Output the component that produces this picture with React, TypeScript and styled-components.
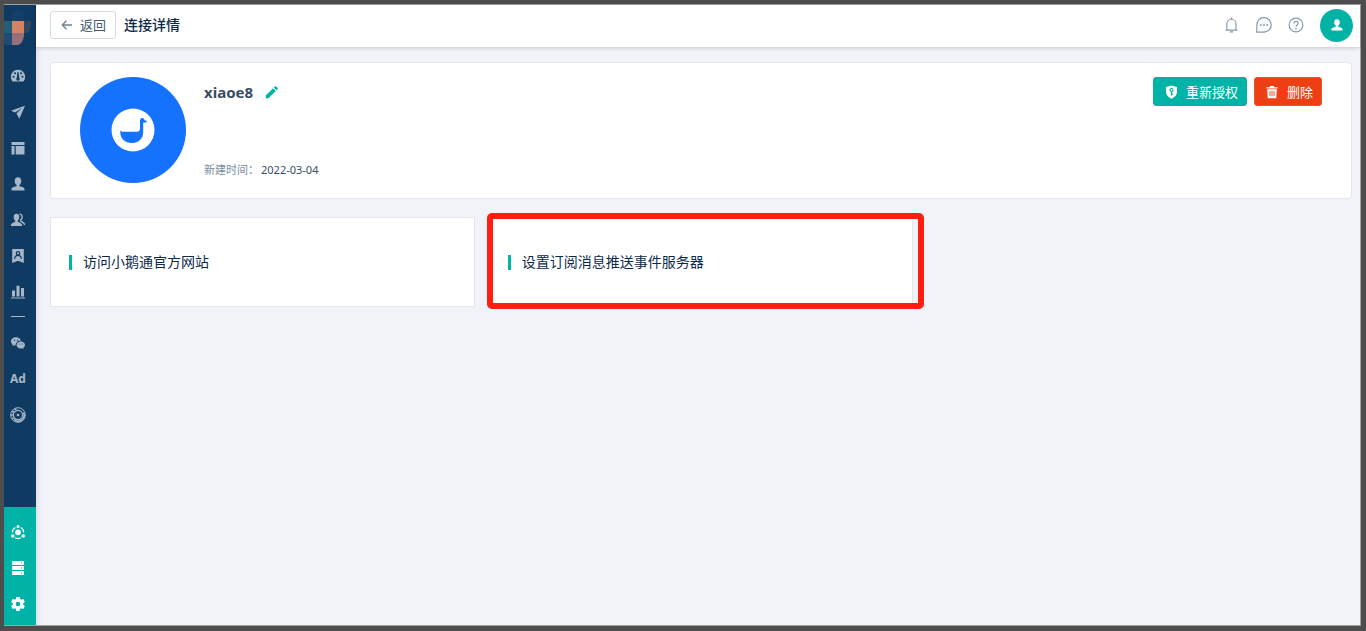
import React from "react";
import styled, { createGlobalStyle, css } from "styled-components";

const GlobalStyle = createGlobalStyle`
  *, *::before, *::after { box-sizing: border-box; }
  body {
    margin: 0;
    font-family: "Noto Sans", "Noto Sans CJK SC", sans-serif;
    color: #0b2a4a;
  }
  button { font: inherit; cursor: pointer; }
  a { color: inherit; text-decoration: none; }
  svg { display: block; flex: none; }
`;

const teal = "#00b3a6";
const line = "#e4e7eb";

const Frame = styled.div`
  display: flex;
  min-height: 100vh;
  border: solid #4d4d4d;
  border-width: 4px 5px 5px 4px;
`;

const Window = styled.div`
  display: flex;
  flex: 1;
  min-width: 0;
  border: solid #a0a2a4;
  border-width: 1px 1px 1px 0;
`;

const Sidebar = styled.aside`
  display: flex;
  flex-direction: column;
  flex: none;
  width: 32px;
  background: #0f3a61;
  color: #a5b7c8;
`;

const Brand = styled.a`
  height: 53px;
`;

const Nav = styled.nav<{ $active?: boolean }>`
  display: flex;
  flex-direction: column;
  ${(p) =>
    p.$active &&
    css`
      margin-top: auto;
      padding: 7px 0 3px;
      background: ${teal};
      color: #fff;
    `}
`;

const NavLink = styled.a`
  display: flex;
  align-items: center;
  justify-content: center;
  height: 36px;
  padding-right: 4px;
`;

const Divider = styled.hr`
  width: 14px;
  height: 1px;
  margin: 6px 0 8px 7px;
  border: 0;
  background: #a5b7c8;
`;

const Page = styled.div`
  display: flex;
  flex: 1;
  flex-direction: column;
  min-width: 0;
  background: #f2f3f8;
  box-shadow: inset 5px 0 5px -3px rgba(15, 58, 97, 0.1);
`;

const Header = styled.header`
  display: flex;
  align-items: center;
  height: 42px;
  padding: 0 7px 2px 14px;
  background: #fff;
  box-shadow: 0 1px 4px rgba(0, 0, 0, 0.18);
`;

const BackButton = styled.button`
  display: flex;
  align-items: center;
  gap: 6px;
  height: 28px;
  padding: 0 9px;
  border: 1px solid #d3dae0;
  border-radius: 3px;
  background: #fff;
  color: #425a70;
  font-size: 13px;
  line-height: 18px;
`;

const Title = styled.h1`
  margin: 0 auto 0 8px;
  font-size: 14px;
  line-height: 20px;
  font-weight: 500;
`;

const HeaderTools = styled.div`
  display: flex;
  align-items: center;
  gap: 16px;
  color: #8796a8;
`;

const IconButton = styled.button`
  padding: 0;
  border: 0;
  background: none;
  color: inherit;
`;

const UserButton = styled(IconButton)`
  display: flex;
  align-items: center;
  justify-content: center;
  width: 33px;
  height: 33px;
  border-radius: 50%;
  background: ${teal};
  color: #fff;
`;

const Content = styled.main`
  display: flex;
  flex-direction: column;
  gap: 18px;
  padding: 15px 8px 15px 14px;
`;

const Summary = styled.section`
  display: flex;
  gap: 18px;
  padding: 14px 29px 15px;
  border: 1px solid ${line};
  border-radius: 4px;
  background: #fff;
`;

const Details = styled.div`
  display: flex;
  flex: 1;
  flex-direction: column;
  justify-content: space-between;
  padding: 4px 0;
`;

const NameRow = styled.div`
  display: flex;
  align-items: center;
  gap: 12px;
`;

const Name = styled.h2`
  margin: 0;
  color: #364d63;
  font-size: 15px;
  line-height: 22px;
  font-weight: 700;
`;

const EditButton = styled(IconButton)`
  color: ${teal};
`;

const Created = styled.dl`
  display: flex;
  gap: 2px;
  margin: 0;
  color: #364d63;
  font-size: 11px;
  line-height: 18px;

  dt { color: #7a8ea0; }
  dd { margin: 0; }
`;

const Actions = styled.div`
  display: flex;
  align-items: flex-start;
  gap: 7px;
`;

const ActionButton = styled.button<{ $danger?: boolean }>`
  display: flex;
  align-items: center;
  gap: 8px;
  height: 29px;
  padding: 0 8px 0 10px;
  border: 1px solid ${(p) => (p.$danger ? "#f0562e" : teal)};
  border-radius: 3px;
  background: ${(p) => (p.$danger ? "#ee3f14" : teal)};
  color: #fff;
  font-size: 13px;
  line-height: 18px;
`;

const Cards = styled.div`
  display: grid;
  grid-template-columns: repeat(3, minmax(0, 1fr));
  gap: 14px;
`;

const LinkCard = styled.a<{ $highlight?: boolean }>`
  position: relative;
  display: flex;
  align-items: center;
  gap: 11px;
  height: 90px;
  padding: 0 18px;
  border: 1px solid ${line};
  background: #fff;
  font-size: 14px;
  line-height: 20px;

  &::before {
    content: "";
    width: 3px;
    height: 15px;
    background: ${teal};
  }

  ${(p) =>
    p.$highlight &&
    css`
      &::after {
        content: "";
        position: absolute;
        inset: -5px -12px -3px -3px;
        border: 6px solid #ff1e10;
        border-radius: 5px;
      }
    `}
`;

type IconProps = { size?: number; children: React.ReactNode };

const Icon = ({ size = 14, children }: IconProps) => (
  <svg width={size} height={size} viewBox="0 0 14 14" fill="currentColor" aria-hidden="true">
    {children}
  </svg>
);

const personPath =
  "M7 .3C4.9.3 3.7 1.8 3.7 3.9c0 1.800.8 3.300 1.900 4.100v1.100C4.800 9.800.500 10.100.500 12v1.500h13V12c0-1.900-4.300-2.200-5.100-2.900V8c1.100-.8 1.900-2.300 1.900-4.100C10.300 1.800 9.100.3 7 .3Z";

const mainIcons: [string, React.ReactNode][] = [
  [
    "仪表盘",
    <g key="i">
      <path d="M7 .8a7 7 0 0 0-5.900 10.900c.3.500.700.900 1.300.900h9.200c.6 0 1-.4 1.300-.9A7 7 0 0 0 7 .8Z" />
      <g fill="#0f3a61">
        <circle cx="2.500" cy="7.800" r="1" />
        <circle cx="4" cy="4.300" r="1" />
        <circle cx="10" cy="4.300" r="1" />
        <circle cx="11.500" cy="7.800" r="1" />
        <path d="M6.500 3h1l.7 5.800a1.700 1.700 0 1 1-2.400 0Z" />
      </g>
    </g>,
  ],
  ["推广", <path key="i" d="M14 .8 0 5.700l4 1.900 7-4.600-5.600 5.500 3 5.200Z" />],
  ["页面", <path key="i" d="M.5 1h13v3H.5ZM.5 5h3v8.500h-3ZM4.700 5h8.800v8.500H4.700Z" />],
  ["联系人", <path key="i" d={personPath} />],
  [
    "客户群",
    <g key="i">
      <path d="M5.500.8C3.700.8 2.700 2 2.700 3.900c0 1.600.6 2.900 1.500 3.600v1.200C3.300 9.500 0 9.900 0 11.800V13h11v-1.200c0-1.900-3.300-2.300-4.200-3.100V7.500c.9-.7 1.500-2 1.500-3.600C8.300 2 7.300.8 5.500.8Z" />
      <path d="M8.500 1.200c3-.5 3.500 4.300 1.100 5.900v1.200c1.200.9 4 1.300 4 3.700" fill="none" stroke="currentColor" strokeWidth="1.400" />
    </g>,
  ],
  [
    "会员",
    <g key="i">
      <path d="M1.200 0h11.600v14L7 11.800 1.200 14Z" />
      <g fill="none" stroke="#0f3a61" strokeWidth="1.200">
        <circle cx="7" cy="4.300" r="1.700" />
        <path d="M3.600 10c.2-3 1.500-3.700 3.400-3.700s3.200.7 3.400 3.700" />
      </g>
    </g>,
  ],
  ["数据分析", <path key="i" d="M1 5.500h3v6H1ZM5.500.8h3v10.700h-3ZM10 3h3v8.500h-3ZM0 12.500h14v1H0Z" />],
];

const channelIcons: [string, React.ReactNode][] = [
  [
    "微信",
    <g key="i">
      <path d="M5.100 1.300C2.300 1.300 0 3.100 0 5.500c0 1.300.7 2.400 1.800 3.200l-.4 1.500 1.800-.9 1.500.3C4.300 6.800 6.600 4.700 9.900 4.800 9.400 2.700 7.400 1.300 5.100 1.300Z" />
      <path d="M9.800 5.500c-2.400 0-4.200 1.500-4.200 3.500s1.800 3.500 4.200 3.500l1.400-.2 1.400.8-.3-1.300c1-.7 1.700-1.700 1.700-2.800 0-2-1.900-3.500-4.200-3.500Z" />
      <g fill="#0f3a61">
        <circle cx="3.500" cy="4.300" r=".7" />
        <circle cx="6.700" cy="4.300" r=".7" />
        <circle cx="8.400" cy="8" r=".6" />
        <circle cx="11.200" cy="8" r=".6" />
      </g>
    </g>,
  ],
];

const systemIcons: [string, React.ReactNode][] = [
  [
    "连接",
    <g key="i">
      <circle cx="7" cy="7.300" r="2.900" />
      <circle cx="7" cy="1.500" r="1.500" />
      <circle cx="1.800" cy="11" r="1.800" />
      <circle cx="12.200" cy="11" r="1.800" />
      <path d="M4.300 2.400a5.800 5.800 0 0 0-3 5.100M9.700 2.400a5.800 5.800 0 0 1 3 5.100M4.200 12.800a6 6 0 0 0 5.600 0" fill="none" stroke="currentColor" strokeWidth="1.100" />
    </g>,
  ],
  [
    "存储",
    <g key="i">
      <path d="M1.200 0h11.600v4H1.200ZM1.200 5h11.600v4H1.200ZM1.200 10h11.600v4H1.200Z" />
      <path d="M9.800 1.500h1.200v1H9.800ZM9.800 6.500h1.200v1H9.800ZM9.800 11.500h1.200v1H9.800Z" fill={teal} />
    </g>,
  ],
  [
    "设置",
    <g key="i" transform="translate(-1.400 -1.400) scale(.7)">
      <path d="M19.400 13a7.600 7.600 0 0 0 0-2l2.200-1.700c.2-.1.300-.4.100-.6l-2-3.500c-.1-.2-.4-.3-.6-.2l-2.500 1a7.300 7.300 0 0 0-1.700-1L14.500 2.400c0-.2-.2-.4-.5-.4h-4c-.3 0-.5.2-.5.4L9.100 5a7.700 7.700 0 0 0-1.700 1l-2.500-1c-.2-.1-.5 0-.6.2l-2 3.500c-.1.200-.1.500.1.600L4.600 11a8 8 0 0 0 0 2l-2.200 1.700c-.2.100-.2.400-.1.600l2 3.500c.1.200.4.300.6.200l2.500-1c.5.400 1.100.700 1.700 1l.4 2.600c0 .2.200.4.500.4h4c.3 0 .5-.2.500-.4l.4-2.600c.6-.3 1.200-.6 1.700-1l2.500 1c.2.100.5 0 .6-.2l2-3.500c.1-.2.100-.5-.1-.6ZM12 15.300a3.300 3.300 0 1 1 0-6.600 3.300 3.300 0 0 1 0 6.600Z" />
    </g>,
  ],
];

const AdLabel = styled.span`
  font-size: 12px;
  line-height: 16px;
  font-weight: 700;
`;

const Logo = () => (
  <svg width="32" height="42" viewBox="0 0 32 42" aria-hidden="true">
    <path d="M8 16V9q0-4 4-4h4q4 0 4 4v7Z" fill="#133f69" />
    <path d="M0 16h8v12H0Z" fill="#235e78" />
    <path d="M8 16h12v12H8Z" fill="#d48463" />
    <path d="M20 16h7v3q0 5-3 9h-4Z" fill="#30475f" />
    <path d="M0 28h8v12H3q-3 0-3-3Z" fill="#1d4b76" />
    <path d="M8 28h12v3q-1 7-6 9H8Z" fill="#96707b" />
  </svg>
);

const RingIcon = () => (
  <svg width="16" height="16" viewBox="0 0 16 16" fill="none" stroke="currentColor" aria-hidden="true">
    <circle cx="8" cy="8" r="7.300" strokeWidth="1" />
    <circle cx="8" cy="8" r="4.600" strokeWidth="1.200" />
    <path d="M6.500 2.100a6 6 0 0 0-3 9.900" strokeWidth="1.600" strokeDasharray="2 1.500" />
    <path d="M4 12.500a6 6 0 0 0 9.500-7" strokeWidth="1.600" />
    <circle cx="8" cy="8" r="1.300" fill="currentColor" stroke="none" />
  </svg>
);

const DuckAvatar = () => (
  <svg width="106" height="106" viewBox="0 0 106 106" role="img" aria-label="小鹅通">
    <circle cx="53" cy="53" r="53" fill="#1472ff" />
    <circle cx="53" cy="53" r="21.500" fill="#fff" />
    <path
      d="M40.300 53.500c.8 1 1.800 1.300 3.200 1.300h13.200c2.300 0 3.300-1 3.300-3.200V43.300c0-2.400 3-3.300 4.100-1.200l.3 1.200 2.200.5v1.600h-3.400v9.800c0 6.400-4.900 10.900-11.500 10.900s-11.400-4.500-11.400-10.500Z"
      fill="#1472ff"
    />
  </svg>
);

const NavItems = ({ items }: { items: [string, React.ReactNode][] }) => (
  <>
    {items.map(([label, art]) => (
      <NavLink key={label} href="#" aria-label={label}>
        <Icon>{art}</Icon>
      </NavLink>
    ))}
  </>
);

export default function App() {
  return (
    <>
      <GlobalStyle />
      <Frame>
        <Window>
          <Sidebar>
            <Brand href="#" aria-label="首页">
              <Logo />
            </Brand>
            <Nav aria-label="主菜单">
              <NavItems items={mainIcons} />
              <Divider />
              <NavItems items={channelIcons} />
              <NavLink href="#">
                <AdLabel>Ad</AdLabel>
              </NavLink>
              <NavLink href="#" aria-label="小程序">
                <RingIcon />
              </NavLink>
            </Nav>
            <Nav $active aria-label="系统菜单">
              <NavItems items={systemIcons} />
            </Nav>
          </Sidebar>

          <Page>
            <Header>
              <BackButton type="button">
                <Icon>
                  <path d="M12 7H2.500M6.500 2.800 2.300 7l4.200 4.200" fill="none" stroke="#6f8193" strokeWidth="1.300" />
                </Icon>
                返回
              </BackButton>
              <Title>连接详情</Title>
              <HeaderTools>
                <IconButton type="button" aria-label="通知">
                  <Icon size={16}>
                    <g fill="none" stroke="currentColor" strokeWidth="1">
                      <path d="M1.300 11.500h10.400M2.500 11.500V6a4 4 0 0 1 8 0v5.500M6.500 .5V2M5.100 13h2.800" />
                    </g>
                  </Icon>
                </IconButton>
                <IconButton type="button" aria-label="消息">
                  <Icon size={16}>
                    <path d="M.7 13.200V7A6.300 6.300 0 1 1 7 13.200Z" fill="none" stroke="currentColor" />
                    <circle cx="4.200" cy="7" r=".8" />
                    <circle cx="7" cy="7" r=".8" />
                    <circle cx="9.800" cy="7" r=".8" />
                  </Icon>
                </IconButton>
                <IconButton type="button" aria-label="帮助">
                  <Icon size={16}>
                    <g fill="none" stroke="currentColor">
                      <circle cx="7" cy="7" r="6" />
                      <path d="M5.100 5.600c0-2.400 3.800-2.300 3.800 0C8.900 7 7 7 7 8.500" />
                    </g>
                    <circle cx="7" cy="10.200" r=".7" />
                  </Icon>
                </IconButton>
                <UserButton type="button" aria-label="账户">
                  <Icon size={12}>
                    <path d={personPath} />
                  </Icon>
                </UserButton>
              </HeaderTools>
            </Header>

            <Content>
              <Summary>
                <DuckAvatar />
                <Details>
                  <NameRow>
                    <Name>xiaoe8</Name>
                    <EditButton type="button" aria-label="编辑名称">
                      <Icon size={13}>
                        <path d="M.8 13.200V10.300L8.700 2.400l2.900 2.900-7.900 7.900ZM9.500 1.600 10.600.5q.7-.6 1.400 0l1.500 1.500q.6.700 0 1.400l-1.100 1.100Z" />
                      </Icon>
                    </EditButton>
                  </NameRow>
                  <Created>
                    <dt>新建时间：</dt>
                    <dd>2022-03-04</dd>
                  </Created>
                </Details>
                <Actions>
                  <ActionButton type="button">
                    <Icon>
                      <path d="M7.500.5 13 2v4.500c0 3.500-2.500 6-5.500 7.300C4.500 12.500 2 10 2 6.500V2Z" />
                      <g fill="none" stroke={teal} strokeWidth="1.200">
                        <circle cx="7.500" cy="5" r="1.500" />
                        <path d="M7.500 6.500v4M7.500 9.200H9" />
                      </g>
                    </Icon>
                    重新授权
                  </ActionButton>
                  <ActionButton type="button" $danger>
                    <Icon>
                      <path d="M5 1h4v1.200h3.700v1.300H1.300V2.200H5Z" />
                      <path d="M2.200 4.200h9.600l-.5 9H2.700Z" />
                      <path d="M5 6v5.200M7 6v5.200M9 6v5.200" stroke="#ee3f14" strokeWidth=".9" />
                    </Icon>
                    删除
                  </ActionButton>
                </Actions>
              </Summary>

              <Cards>
                <LinkCard href="#">访问小鹅通官方网站</LinkCard>
                <LinkCard href="#" $highlight>
                  设置订阅消息推送事件服务器
                </LinkCard>
              </Cards>
            </Content>
          </Page>
        </Window>
      </Frame>
    </>
  );
}
